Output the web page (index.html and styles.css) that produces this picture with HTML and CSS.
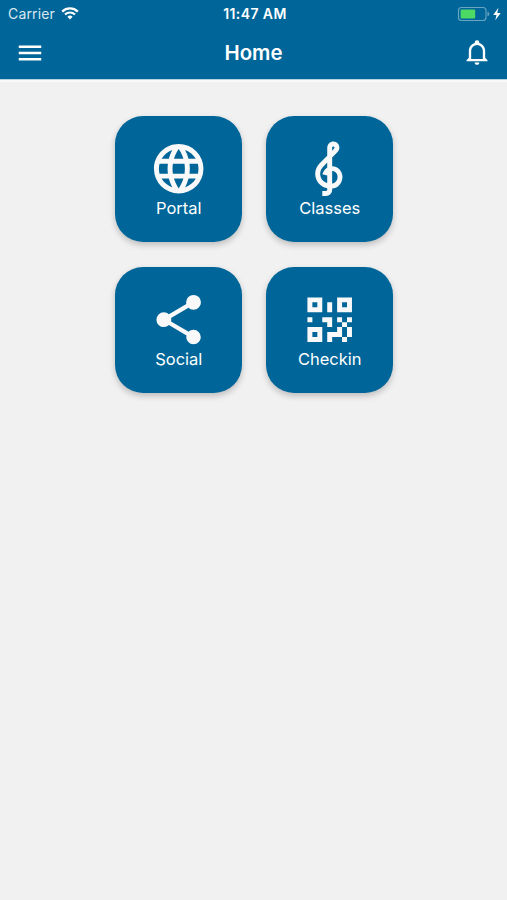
FILE: index.html
```html
<!DOCTYPE html>
<html lang="en">
<head>
<meta charset="utf-8">
<title>Home</title>
<link rel="stylesheet" href="styles.css">
</head>
<body>
<header class="header">
  <div class="status">
    <div class="status-left">
      <span class="carrier">Carrier</span>
      <svg class="wifi" viewBox="0 0 18 13"><path d="M9 12.5 6.4 9.8a3.8 3.8 0 0 1 5.2 0z" fill="#fff"/><path d="M4 7.5a7.2 7.2 0 0 1 10 0M1.2 4.6a11.2 11.2 0 0 1 15.6 0" fill="none" stroke="#fff" stroke-width="2.2"/></svg>
    </div>
    <span class="time">11:47 AM</span>
    <div class="status-right">
      <svg class="battery" viewBox="0 0 45 16"><rect x="1.5" y="1.5" width="27.5" height="13" rx="3" fill="none" stroke="#6ba5c4" stroke-width="1.1"/><rect x="3.6" y="3.5" width="14.6" height="9" rx="1" fill="#4cd964"/><path d="M30.5 5.7q1.8.5 1.8 2.3t-1.8 2.3z" fill="#6ba5c4"/><path d="M41.4 1.8 36.2 9h3.3l-1.2 5.2L43.7 7h-3.4z" fill="#fff"/></svg>
    </div>
  </div>
  <nav class="navbar">
    <svg class="nav-icon" viewBox="0 0 24 24"><path d="M3 6h18v2H3V6m0 5h18v2H3v-2m0 5h18v2H3v-2z"/></svg>
    <h1 class="title">Home</h1>
    <svg class="nav-icon bell" viewBox="0 0 24 24"><path d="M10 21h4c0 1.100-.9 2-2 2s-2-.9-2-2m11-2v1H3v-1l2-2v-6c0-3.100 2.030-5.830 5-6.710V4a2 2 0 0 1 4 0v.29c2.970.88 5 3.610 5 6.710v6l2 2m-4-8a5 5 0 0 0-10 0v7h10v-7z"/></svg>
  </nav>
</header>
<main class="grid">
  <a class="tile">
    <svg class="tile-icon" viewBox="0 0 24 24"><path d="M16.36,14C16.44,13.34 16.5,12.68 16.5,12C16.5,11.32 16.44,10.66 16.36,10H19.74C19.9,10.64 20,11.31 20,12C20,12.69 19.9,13.36 19.74,14M14.59,19.56C15.19,18.45 15.65,17.25 15.97,16H18.92C17.96,17.65 16.43,18.93 14.59,19.56M14.34,14H9.66C9.56,13.34 9.5,12.68 9.5,12C9.5,11.32 9.56,10.65 9.66,10H14.34C14.43,10.65 14.5,11.32 14.5,12C14.5,12.68 14.43,13.34 14.34,14M12,19.96C11.17,18.76 10.5,17.43 10.09,16H13.91C13.5,17.43 12.83,18.76 12,19.96M8,8H5.08C6.03,6.34 7.57,5.06 9.4,4.44C8.8,5.55 8.35,6.75 8,8M5.08,16H8C8.35,17.25 8.8,18.45 9.4,19.56C7.57,18.93 6.03,17.65 5.08,16M4.26,14C4.1,13.36 4,12.69 4,12C4,11.31 4.1,10.64 4.26,10H7.64C7.56,10.66 7.5,11.32 7.5,12C7.5,12.68 7.56,13.34 7.64,14M12,4.03C12.83,5.23 13.5,6.57 13.91,8H10.09C10.5,6.57 11.17,5.23 12,4.03M18.92,8H15.97C15.65,6.75 15.19,5.55 14.59,4.44C16.43,5.07 17.96,6.34 18.92,8M12,2C6.47,2 2,6.5 2,12A10,10 0 0,0 12,22A10,10 0 0,0 22,12A10,10 0 0,0 12,2Z"/></svg>
    <span class="label">Portal</span>
  </a>
  <a class="tile">
    <svg class="tile-icon" viewBox="0 0 24 24"><path d="M13 11V7.5L15.2 5.29C16 4.5 16.15 3.24 15.59 2.26C15.14 1.47 14.32 1 13.45 1C13.24 1 13 1.03 12.81 1.09C11.73 1.38 11 2.38 11 3.5V6.74L7.86 9.91C6.2 11.6 5.7 14.13 6.61 16.34C7.38 18.24 9.06 19.55 11 19.89V20.5C11 20.76 10.77 21 10.5 21H9V23H10.5C11.85 23 13 21.89 13 20.5V20C15.03 20 17.16 18.08 17.16 15.25C17.16 12.95 15.24 11 13 11M13 3.5C13 3.27 13.11 3.09 13.32 3.03C13.54 2.97 13.77 3.06 13.88 3.26C14 3.46 13.96 3.71 13.8 3.87L13 4.73V3.5M11 11.5C10.03 12.14 9.3 13.24 9.04 14.26L11 14.78V17.83C9.87 17.53 8.9 16.71 8.43 15.57C7.84 14.11 8.16 12.45 9.26 11.33L11 9.5V11.5M13 18V12.94C14.17 12.94 15.18 14.04 15.18 15.25C15.18 17 13.91 18 13 18Z"/></svg>
    <span class="label">Classes</span>
  </a>
  <a class="tile">
    <svg class="tile-icon" viewBox="0 0 24 24"><path d="M18,16.08C17.24,16.08 16.56,16.38 16.04,16.85L8.91,12.7C8.96,12.47 9,12.24 9,12C9,11.76 8.96,11.53 8.91,11.3L15.96,7.19C16.5,7.69 17.21,8 18,8A3,3 0 0,0 21,5A3,3 0 0,0 18,2A3,3 0 0,0 15,5C15,5.24 15.04,5.47 15.09,5.7L8.04,9.81C7.5,9.31 6.79,9 6,9A3,3 0 0,0 3,12A3,3 0 0,0 6,15C6.79,15 7.5,14.69 8.04,14.19L15.16,18.34C15.11,18.55 15.08,18.77 15.08,19C15.08,20.61 16.39,21.91 18,21.91C19.61,21.91 20.92,20.61 20.92,19A2.92,2.92 0 0,0 18,16.08Z"/></svg>
    <span class="label">Social</span>
  </a>
  <a class="tile">
    <svg class="tile-icon" viewBox="0 0 24 24"><path d="M3,11H5V13H3V11M11,5H13V9H11V5M9,11H13V15H11V13H9V11M15,11H17V13H19V11H21V13H19V15H21V19H19V21H17V19H13V21H11V17H15V15H17V13H15V11M19,19V15H17V19H19M15,3H21V9H15V3M17,5V7H19V5H17M3,3H9V9H3V3M5,5V7H7V5H5M3,15H9V21H3V15M5,17V19H7V17H5Z"/></svg>
    <span class="label">Checkin</span>
  </a>
</main>
</body>
</html>
```
FILE: styles.css
```css
* { box-sizing: border-box; }
body {
  margin: 0;
  min-height: 900px;
  background: #f1f1f1;
  color: #fff;
  font-family: Inter, "Liberation Sans", sans-serif;
}
.header {
  height: 79px;
  background: #069;
  box-shadow: 0 1px 0 #b4d3e1, 0 3px 0 #f9f9f9;
}
.status {
  display: grid;
  grid-template-columns: 1fr auto 1fr;
  align-items: center;
  height: 27px;
  padding: 0 5px 0 8px;
}
.status-left { display: flex; align-items: center; gap: 6px; }
.carrier { font-size: 14px; letter-spacing: 0.15px; color: #d9e8f0; }
.wifi { width: 18px; height: 13px; }
.time { font-size: 14px; font-weight: 600; letter-spacing: 0.4px; }
.status-right { display: flex; justify-content: flex-end; }
.battery { width: 45px; height: 16px; }
.navbar {
  display: grid;
  grid-template-columns: 1fr auto 1fr;
  align-items: center;
  height: 51px;
  padding: 0 16px 0 15px;
}
.nav-icon { width: 30px; height: 30px; fill: #fff; }
.bell { justify-self: end; width: 28px; height: 28px; margin-bottom: 2px; }
.title { margin: 0; padding-left: 1px; font-size: 20.4px; font-weight: 600; line-height: 24px; }
.grid {
  display: grid;
  grid-template-columns: repeat(2, 126.5px);
  grid-auto-rows: 126.5px;
  gap: 24.5px;
  justify-content: center;
  padding: 36.5px 0 0 1px;
}
.tile {
  display: flex;
  flex-direction: column;
  align-items: center;
  padding: 23px 0 0 0.5px;
  border-radius: 28px;
  background: #069;
  box-shadow: 0 3px 6px rgba(0, 0, 0, 0.22);
}
.tile-icon { flex: none; width: 59.4px; height: 59.4px; fill: #f9f9f9; }
.label {
  font-size: 16.5px;
  line-height: 20px;
}
```
